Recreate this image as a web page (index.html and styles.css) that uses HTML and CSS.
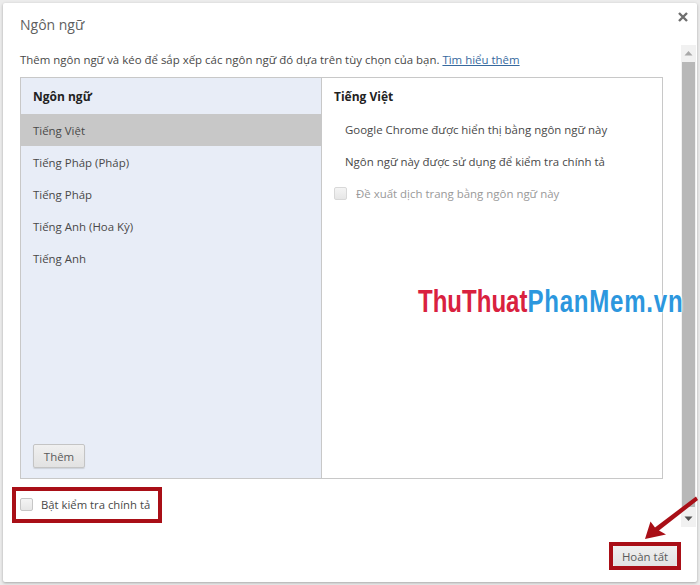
FILE: index.html
```html
<!DOCTYPE html>
<html lang="vi">
<head>
<meta charset="utf-8">
<title>Ngôn ngữ</title>
<link rel="stylesheet" href="styles.css">
</head>
<body>
<div class="dialog">
  <header class="dialog-head">
    <h1 class="title">Ngôn ngữ</h1>
    <svg class="close" width="10" height="10" viewBox="0 0 10 10"><path d="M1 1 9 9M9 1 1 9" stroke="#6e6e6e" stroke-width="2.4" fill="none"/></svg>
  </header>
  <div class="dialog-body">
    <div class="content">
      <p class="intro">Thêm ngôn ngữ và kéo để sắp xếp các ngôn ngữ đó dựa trên tùy chọn của bạn. <a class="link" href="#">Tìm hiểu thêm</a></p>
      <div class="panel">
        <div class="languages">
          <div class="col-head">Ngôn ngữ</div>
          <ul class="lang-list">
            <li class="lang selected">Tiếng Việt</li>
            <li class="lang">Tiếng Pháp (Pháp)</li>
            <li class="lang">Tiếng Pháp</li>
            <li class="lang">Tiếng Anh (Hoa Kỳ)</li>
            <li class="lang">Tiếng Anh</li>
          </ul>
          <button class="btn add-btn">Thêm</button>
        </div>
        <div class="details">
          <div class="col-head">Tiếng Việt</div>
          <div class="info">Google Chrome được hiển thị bằng ngôn ngữ này</div>
          <div class="info">Ngôn ngữ này được sử dụng để kiểm tra chính tả</div>
          <label class="check disabled-check"><span class="box"></span><span>Đề xuất dịch trang bằng ngôn ngữ này</span></label>
        </div>
      </div>
      <div class="callout spell">
        <label class="check"><span class="box"></span><span>Bật kiểm tra chính tả</span></label>
      </div>
    </div>
    <div class="scrollbar">
      <svg class="arrow-btn" width="15" height="17" viewBox="0 0 15 17"><path d="M3.5 10.5 7.5 6l4 4.5z" fill="#a8a8a8"/></svg>
      <div class="thumb"></div>
      <svg class="arrow-btn" width="15" height="17" viewBox="0 0 15 17"><path d="M3.5 6.5 7.5 11l4-4.5z" fill="#505050"/></svg>
    </div>
  </div>
  <footer class="dialog-foot">
    <div class="callout done"><button class="btn done-btn">Hoàn tất</button></div>
  </footer>
</div>
<div class="watermark"><span class="wm-red">ThuThuat</span><span class="wm-blue">PhanMem.vn</span></div>
<svg class="pointer" width="60" height="50" viewBox="640 495 60 50"><path d="M696 496.5 698 500 659 530.5 666 534.5 645 539 650.5 521.5 655 527.5z" fill="#a90f17"/></svg>
</body>
</html>
```
FILE: styles.css
```css
* { box-sizing: border-box; }
html, body { height: 100%; }
body {
  margin: 0;
  padding: 3px;
  background: #ececec;
  font-family: "Open Sans", "Noto Sans", sans-serif;
  font-size: 11.45px;
  color: #484848;
  overflow: hidden;
}
.dialog {
  width: 694px;
  height: 579px;
  background: #fff;
  border-radius: 2px;
  box-shadow: 0 1px 3px rgba(0,0,0,.3);
  display: flex;
  flex-direction: column;
}
.dialog-head {
  height: 42px;
  flex: none;
  display: flex;
  justify-content: space-between;
  padding: 10px 9px 0 17px;
}
.title {
  margin: 0;
  font-size: 14px;
  font-weight: 400;
  line-height: 24px;
  color: #5f5f5f;
}
.close { margin-top: -1px; }
.dialog-body {
  height: 482px;
  flex: none;
  display: flex;
  padding-right: 1px;
}
.content {
  flex: 1;
  padding: 0 18px 0 17px;
  min-width: 0;
}
.intro {
  margin: 0;
  height: 32px;
  line-height: 30px;
  white-space: nowrap;
}
.link { color: #36699e; }
.panel {
  height: 402px;
  border: 1px solid #c8c8c8;
  display: flex;
}
.languages {
  width: 301px;
  flex: none;
  background: #e8edf7;
  border-right: 1px solid #c8c8c8;
  display: flex;
  flex-direction: column;
  padding-bottom: 10px;
}
.col-head {
  height: 36px;
  line-height: 38px;
  padding-left: 12px;
  font-size: 12px;
  font-weight: 700;
  color: #222;
}
.lang-list {
  list-style: none;
  margin: 0;
  padding: 0;
  flex: 1;
}
.lang {
  height: 32px;
  line-height: 34px;
  padding-left: 12px;
}
.selected { background: #c8c8c8; }
.btn {
  font: inherit;
  color: #5a5a5a;
  border: 1px solid #c4c4c4;
  border-radius: 2px;
  background: linear-gradient(#f0f0f0, #e2e2e2);
  box-shadow: 0 1px 1px rgba(0,0,0,.12);
  padding: 0;
}
.add-btn {
  width: 52px;
  height: 24px;
  margin-left: 12px;
}
.details { flex: 1; }
.info {
  height: 32px;
  line-height: 31px;
  padding-left: 23px;
}
.check {
  display: flex;
  align-items: center;
  gap: 8px;
}
.box {
  width: 13px;
  height: 13px;
  flex: none;
  border: 1px solid #c6c6c6;
  border-radius: 2px;
  background: linear-gradient(#f4f4f4, #e6e6e6);
}
.disabled-check {
  color: #999;
  height: 30px;
  padding-left: 12px;
  gap: 9px;
}
.disabled-check .box { border-color: #d8d8d8; }
.callout { border: 4px solid #a90f17; }
.spell {
  width: 150px;
  height: 36px;
  margin: 8px 0 0 -8px;
  padding: 0 0 1px 4px;
  display: flex;
  align-items: center;
  font-size: 11.3px;
}
.dialog-foot {
  flex: 1;
  display: flex;
  justify-content: flex-end;
  padding: 15px 16px 0 0;
}
.done {
  width: 72px;
  height: 28px;
}
.done-btn {
  width: 100%;
  height: 100%;
  display: block;
  border: 0;
  box-shadow: none;
}
.scrollbar {
  width: 15px;
  flex: none;
  background: #f1f1f1;
  display: flex;
  flex-direction: column;
}
.arrow-btn { display: block; flex: none; }
.thumb {
  flex: 1;
  margin: 0 1px 3px;
  background: #b8b8b8;
}
.watermark {
  position: absolute;
  left: 418px;
  top: 284px;
  font-family: "Liberation Sans", sans-serif;
  font-size: 31px;
  line-height: 36px;
  font-weight: 700;
  white-space: nowrap;
  transform: scaleX(.775);
  transform-origin: left center;
  text-shadow: 0 0 3px #fff, 0 0 3px #fff;
}
.wm-red { color: #d9213f; }
.wm-blue { color: #2c97de; letter-spacing: 1px; }
.pointer {
  position: absolute;
  left: 640px;
  top: 495px;
}
```
